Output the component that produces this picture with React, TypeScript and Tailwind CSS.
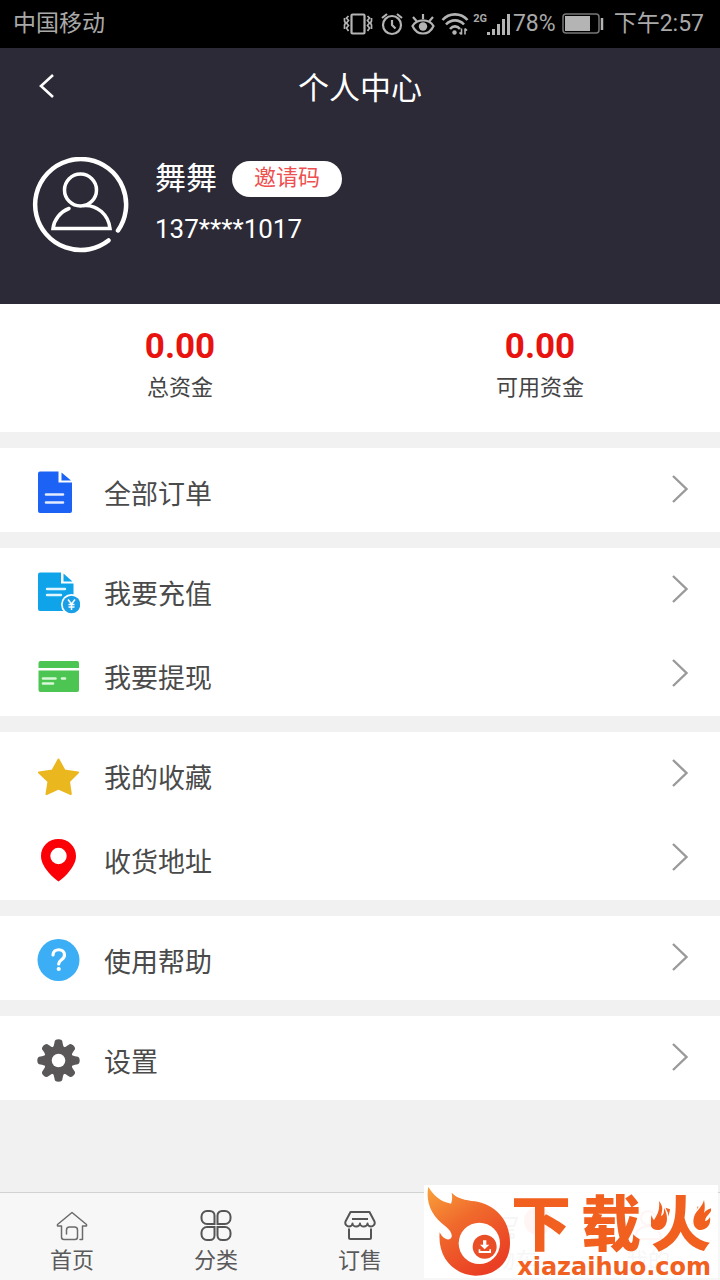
import React from 'react';

interface MenuItem {
  label: string;
  icon: React.ReactNode;
}

interface Tab {
  label: string;
  icon: React.ReactNode;
  hasBadge?: boolean;
}

// Menu icons
const OrderIcon = () => (
  <svg viewBox="0 0 44 44" className="h-11 w-11 shrink-0">
    <path d="M4 0.5H22.5V11.5H36V40a2 2 0 0 1-2 2H4a2 2 0 0 1-2-2V2.500a2 2 0 0 1 2-2z" fill="#1b62f5" />
    <path d="M25.500 1.500L35 9.500H25.500z" fill="#1b62f5" />
    <path d="M10 23.500h17M10 31.500h17" stroke="#e4ecff" strokeWidth="2.600" strokeLinecap="round" />
  </svg>
);

const RechargeIcon = () => (
  <svg viewBox="0 0 44 44" className="h-11 w-11 shrink-0">
    <path d="M4 1.500H25V12.500H37.500V40H4a2 2 0 0 1-2-2V3.500a2 2 0 0 1 2-2z" fill="#0fa4e9" />
    <path d="M27.500 2.500L36.500 10.500H27.500z" fill="#0fa4e9" />
    <path d="M11 18h18M11 24h14" stroke="#e0f5ff" strokeWidth="2.400" strokeLinecap="round" />
    <circle cx="35.500" cy="33.500" r="10.500" fill="#fff" />
    <circle cx="35.500" cy="33.500" r="8.800" fill="#1a9fe6" />
    <path d="M32 28.500l3.500 4.500 3.500-4.500M35.500 33v6M32.500 33.500h6M32.500 36h6" stroke="#fff" strokeWidth="1.500" fill="none" />
  </svg>
);

const WithdrawIcon = () => (
  <svg viewBox="0 0 44 44" className="h-11 w-11 shrink-0">
    <path d="M4.500 6H41a2 2 0 0 1 2 2v5H2.500V8a2 2 0 0 1 2-2z" fill="#4cc552" />
    <path d="M2.500 15.500H43V35a2 2 0 0 1-2 2H4.500a2 2 0 0 1-2-2z" fill="#4cc552" />
    <path d="M7 23.500h12.500M26 23.500h3M7 28.500h10" stroke="#d8f7d9" strokeWidth="2.600" strokeLinecap="round" />
  </svg>
);

const StarIcon = () => (
  <svg viewBox="0 0 44 44" className="h-11 w-11 shrink-0">
    <path
      d="M22.500 4.500L28.500 15.500L42 17.500L33 26.500L34.800 39L22.500 33.500L10.500 39L12.500 26.500L3 17.500L16.500 15.500z"
      fill="#ebb71f"
      stroke="#ebb71f"
      strokeWidth="2"
      strokeLinejoin="round"
    />
  </svg>
);

const PinIcon = () => (
  <svg viewBox="0 0 44 44" className="h-11 w-11 shrink-0">
    <path
      fillRule="evenodd"
      d="M22.500 0C12.500 0 5 7.500 5 17c0 6.500 4 12 8 17 3 3.500 6.500 6.500 9.500 8.500 3-2 6.500-5 9.500-8.500 4-5 8-10.500 8-17C40 7.500 32.500 0 22.500 0zM22.500 8.800a8.200 8.200 0 1 1 0 16.400 8.200 8.200 0 0 1 0-16.400z"
      fill="#fb0007"
    />
  </svg>
);

const HelpIcon = () => (
  <svg viewBox="0 0 44 44" className="h-11 w-11 shrink-0">
    <circle cx="22.500" cy="21" r="21" fill="#3baef5" />
    <path d="M17 16c0-7 11.500-7 11.500 0 0 5-5.800 4.500-5.800 9" stroke="#fff" strokeWidth="3.200" fill="none" strokeLinecap="round" />
    <circle cx="22.700" cy="30" r="2.100" fill="#fff" />
  </svg>
);

const SettingsIcon = () => (
  <svg viewBox="0 0 44 44" className="h-11 w-11 shrink-0">
    <g fill="#5a5758" transform="translate(22.500 21.500)">
      <circle r="14.500" />
      {[0, 45, 90, 135, 180, 225, 270, 315].map((angle) => (
        <path key={angle} d="M-6.500-12C-4.500-14-4.500-16-4-18a4 3.200 0 0 1 8 0C4.500-16 4.500-14 6.500-12z" transform={`rotate(${angle})`} />
      ))}
      <circle r="6.800" fill="#fff" />
    </g>
  </svg>
);

const ChevronRight = () => (
  <svg viewBox="0 0 18 30" className="mb-0.5 h-[30px] w-[18px]" fill="none" stroke="#9a9a9a" strokeWidth="2.400">
    <path d="M2 2l13.500 13L2 28" />
  </svg>
);

// Tab bar icons
const HomeIcon = () => (
  <svg viewBox="0 0 32 32" className="h-8 w-8" fill="none" stroke="#6b6b6b" strokeWidth="1.500" strokeLinejoin="round" strokeLinecap="round">
    <path d="M24 30.500h2.500V17H30.500V15.500L16 3.500L1.500 15.500V17h4v11a2.500 2.500 0 0 0 2.500 2.500h11a2.500 2.500 0 0 0 2.500-2.500v-7a3 3 0 0 0-3-3h-5a3 3 0 0 0-3 3v4" />
  </svg>
);

const CategoryIcon = () => (
  <svg viewBox="0 0 32 32" className="h-8 w-8" fill="none" stroke="#555" strokeWidth="2">
    <path d="M7 2h3a4.500 4.500 0 0 1 4.500 4.500V15H7a5.500 5.500 0 0 1-5.500-5.500v-2A5.500 5.500 0 0 1 7 2z" />
    <path d="M25 2h-3a4.500 4.500 0 0 0-4.500 4.500V15H25a5.500 5.500 0 0 0 5.500-5.500v-2A5.500 5.500 0 0 0 25 2z" />
    <path d="M7 31h3a4.500 4.500 0 0 0 4.500-4.500V18H7a5.500 5.500 0 0 0-5.500 5.500v2A5.500 5.500 0 0 0 7 31z" />
    <path d="M25 31h-3a4.500 4.500 0 0 1-4.500-4.500V18H25a5.500 5.500 0 0 1 5.500 5.500v2A5.500 5.500 0 0 1 25 31z" />
  </svg>
);

const ShopIcon = () => (
  <svg viewBox="0 0 32 32" className="h-8 w-8" fill="none" stroke="#555" strokeWidth="2" strokeLinejoin="round">
    <path d="M6.500 3h19L30.500 12.500c1 3-1.500 5-3.500 5s-3.500-1.500-3.500-3c0 1.500-1.500 3-3.700 3S16 16 16 14.500c0 1.500-1.500 3-3.700 3s-3.800-1.500-3.800-3c0 1.500-1.500 3-3.500 3s-4.500-2-3.500-5z" />
    <path d="M8 10h16" />
    <path d="M5 19.500v9a1.500 1.500 0 0 0 1.500 1.500h19a1.500 1.500 0 0 0 1.500-1.500v-9" />
  </svg>
);

const CartIcon = () => (
  <svg viewBox="0 0 32 32" className="h-8 w-8" fill="none" stroke="#555" strokeWidth="2">
    <path d="M1 5h5l4 16h16M8 9h21l-3 8H10" />
    <circle cx="12" cy="27" r="2" />
    <circle cx="24" cy="27" r="2" />
  </svg>
);

const UserIcon = () => (
  <svg viewBox="0 0 32 32" className="h-8 w-8" fill="none" stroke="#f03c3c" strokeWidth="2">
    <circle cx="16" cy="9" r="7" />
    <path d="M3 30c0-17 26-17 26 0z" />
  </svg>
);

const menuGroups: MenuItem[][] = [
  [{ label: '全部订单', icon: <OrderIcon /> }],
  [
    { label: '我要充值', icon: <RechargeIcon /> },
    { label: '我要提现', icon: <WithdrawIcon /> },
  ],
  [
    { label: '我的收藏', icon: <StarIcon /> },
    { label: '收货地址', icon: <PinIcon /> },
  ],
  [{ label: '使用帮助', icon: <HelpIcon /> }],
  [{ label: '设置', icon: <SettingsIcon /> }],
];

const tabs: Tab[] = [
  { label: '首页', icon: <HomeIcon /> },
  { label: '分类', icon: <CategoryIcon /> },
  { label: '订售', icon: <ShopIcon /> },
  { label: '购物车', icon: <CartIcon />, hasBadge: true },
  { label: '我的', icon: <UserIcon /> },
];

const funds = [
  { label: '总资金', value: '0.00' },
  { label: '可用资金', value: '0.00' },
];

// Phone status bar
const StatusBar = () => (
  <div className="flex h-12 items-center justify-between bg-black pl-[13px] pr-4 text-[23px] text-[#a9a9a9]">
    <span>中国移动</span>
    <div className="flex items-center">
      <svg viewBox="0 0 30 24" className="mr-2 h-6 w-[30px]" fill="none" stroke="#b4b4b4" strokeWidth="2.200">
        <rect x="8.500" y="2.500" width="13" height="19" rx="1" />
        <path d="M5.500 4l-2 2 2 2.500-2 2.500 2 2.500-2 2.500 2 3M1.500 6v3l1 2-1 2v4M24.500 4l2 2-2 2.500 2 2.500-2 2.500 2 2.500-2 3M28.500 6v3l-1 2 1 2v4" strokeWidth="1.700" />
      </svg>
      <svg viewBox="0 0 22 24" className="mr-2 h-6 w-[22px]" fill="none" stroke="#b4b4b4" strokeWidth="2.200">
        <circle cx="11" cy="13" r="9" />
        <path d="M11 8v5l3.500 3.500M1 6L6 2M21 6L16 2" />
      </svg>
      <svg viewBox="0 0 24 24" className="mr-1.5 h-6 w-6" fill="none" stroke="#b4b4b4" strokeWidth="2.200">
        <path d="M1.500 14C6 6.500 18 6.500 22.500 14 18 24 6 24 1.500 14zM12 7V2M5.500 9L2 5M18.500 9L22 5" />
        <circle cx="12" cy="14.500" r="4.200" fill="#b4b4b4" stroke="none" />
      </svg>
      <svg viewBox="0 0 28 24" className="mr-1 h-6 w-7" fill="none" stroke="#b4b4b4" strokeWidth="2.600">
        <path d="M1.500 8C8 0.500 20 0.500 26.500 8M5 12.500c5-5.500 13-5.500 18 0M9 17c3-3.500 7-3.500 10 0" />
        <circle cx="13.500" cy="20.500" r="2.200" fill="#b4b4b4" stroke="none" />
        <path d="M20.500 16.500v6M18.500 20.500l2 2M24 22.500v-6M26 18.500l-2-2" strokeWidth="1.600" />
      </svg>
      <span className="mb-2.5 text-[11px] font-bold leading-4">2G</span>
      <svg viewBox="0 0 24 24" className="h-6 w-6" fill="#b4b4b4">
        <path d="M0 20h3v3H0zM5 17h3v6H5zM10 12h3v11h-3zM15 7h3v16h-3zM20 2h3v21h-3z" />
      </svg>
      <span className="ml-0.5 mr-1.5">78%</span>
      <svg viewBox="0 0 42 22" className="mr-2.5 h-[22px] w-[42px]" fill="none" stroke="#777" strokeWidth="1.500">
        <rect x="1" y="1" width="36" height="19" rx="3" />
        <rect x="3" y="3" width="25" height="15" fill="#b4b4b4" stroke="none" />
        <path d="M40 5v12" stroke="#b4b4b4" strokeWidth="2.500" />
      </svg>
      <span>下午2:57</span>
    </div>
  </div>
);

// Title bar and account details
const Header = () => (
  <header className="h-64 bg-[#2b2a36] text-white">
    <div className="grid h-20 grid-cols-[80px_1fr_80px] items-center">
      <a href="#" aria-label="返回" className="pl-[38px] pb-1">
        <svg viewBox="0 0 18 26" className="h-[26px] w-[18px]" fill="none" stroke="#fff" strokeWidth="2.600">
          <path d="M15 2L3 13l12 11" />
        </svg>
      </a>
      <h1 className="pt-0.5 text-center text-[31px] leading-10">个人中心</h1>
    </div>
    <div className="flex items-center gap-6.5 pl-[31px] pt-6.5">
      <svg viewBox="0 0 98 98" className="h-[98px] w-[98px]" fill="none" stroke="#fff" strokeWidth="4" strokeLinecap="round">
        <path d="M77.500 83.500A45.500 45.500 0 1 1 87 73.500" strokeWidth="4.500" />
        <circle cx="49.500" cy="33" r="16" strokeWidth="3.500" />
        <path d="M38 51.500C29 55 23 63 22 71.500H79C77.500 58 66.500 47.500 52.500 48.500" strokeWidth="3.500" />
      </svg>
      <div className="pb-1">
        <div className="flex items-center gap-[15px]">
          <span className="text-[31px] leading-[50px]">舞舞</span>
          <button type="button" className="h-9 w-[110px] rounded-full bg-white pb-0.5 text-[22px] leading-8 text-[#ee5050]">
            邀请码
          </button>
        </div>
        <p className="text-[26px] leading-[50px]">137****1017</p>
      </div>
    </div>
  </header>
);

// Promo logo shown over the tab bar
const SiteLogo = () => (
  <div className="absolute bottom-0.5 right-0.5 flex h-[93px] w-[294px] bg-white/95 text-[#f1601f]">
    <svg viewBox="42 45 261 279" className="h-[93px] w-[87px] shrink-0">
      <defs>
        <linearGradient id="flame" x1="0" y1="0" x2="0.600" y2="1">
          <stop offset="0" stopColor="#f9a23c" />
          <stop offset="0.450" stopColor="#f06a2c" />
          <stop offset="1" stopColor="#ea3f24" />
        </linearGradient>
      </defs>
      <path
        d="M55 50C72 80 95 95 123 101C127 92 127 80 125 68C142 86 165 90 195 94C255 103 301 150 300 220C300 280 255 318 195 317C130 314 82 262 89 187C97 203 110 212 120 207C131 200 124 183 108 170C65 140 46 98 55 50z"
        fill="url(#flame)"
      />
      <circle cx="208" cy="220" r="62" fill="#fff" />
      <circle cx="224" cy="230" r="36" fill="#e94e27" />
      <path d="M219 211h10v13h9l-14 14-14-14h9zM206 238h5v5h27v-5h5v11h-37z" fill="#fff" />
    </svg>
    <div className="flex flex-col items-end pt-2">
      <div className="flex gap-2.5 text-[60px] font-black leading-[66px]">
        <span>下</span>
        <span>载</span>
        <span className="relative">
          火
          <svg
            viewBox="0 0 60 68"
            className="absolute inset-0 h-[68px] w-[60px]"
            fill="#f1601f"
            stroke="#fff"
            strokeWidth="3"
            paintOrder="stroke"
          >
            <path d="M8 8c5 6 3 10 2 15 3-1 3-4 3-8 5 8 4 20-5 22C0 38-3 31 1 22c0 3 1 4 2 5 4-6 6-11 5-19z" />
            <path d="M53 7c-2 8-8 10-10 17-2 7 1 13 7 13 7-1 10-6 9-13-1 2-3 4-5 4 1-6 6-7 7-13-3 1-6 2-8 5 1-4 1-8 0-13z" />
          </svg>
        </span>
      </div>
      <span className="font-['DejaVu_Sans'] text-2xl/4 font-bold">xiazaihuo.com</span>
    </div>
  </div>
);

const App: React.FC = () => {
  return (
    <div className="relative flex min-h-screen flex-col bg-[#f1f1f1] font-[Roboto,'Noto_Sans_CJK_SC',sans-serif]">
      <StatusBar />
      <Header />

      {/* Funds */}
      <section className="grid h-32 grid-cols-2 bg-white pt-5.5 text-center">
        {funds.map((fund) => (
          <div key={fund.label}>
            <p className="text-[35px] font-bold leading-[42px] text-[#e8130f]">{fund.value}</p>
            <p className="text-[22px] leading-10 text-[#444]">{fund.label}</p>
          </div>
        ))}
      </section>

      {/* Menu */}
      <main className="flex flex-col gap-4 py-4">
        {menuGroups.map((group) => (
          <ul key={group[0].label} className="bg-white">
            {group.map((item) => (
              <li key={item.label}>
                <a href="#" className="flex h-21 items-center justify-between pl-9 pr-[31px]">
                  <span className="flex items-center gap-6 pt-1.5">
                    {item.icon}
                    <span className="pt-1 text-[27px] leading-10 text-[#4a4a4a]">{item.label}</span>
                  </span>
                  <ChevronRight />
                </a>
              </li>
            ))}
          </ul>
        ))}
      </main>

      {/* Tab bar */}
      <nav className="mt-auto grid h-22 grid-cols-5 border-t border-[#d2d2d2] bg-[#f7f7f7]">
        {tabs.map((tab) => (
          <a key={tab.label} href="#" className="flex flex-col items-center pt-4">
            <span className="relative">
              {tab.icon}
              {tab.hasBadge && <span className="absolute -top-0.5 left-9 h-7 w-7 rounded-full bg-[#f03c3c]" />}
            </span>
            <span className="pt-1 text-[22px] leading-8 text-[#5a5a5a]">{tab.label}</span>
          </a>
        ))}
      </nav>

      <SiteLogo />
    </div>
  );
};

export default App;
